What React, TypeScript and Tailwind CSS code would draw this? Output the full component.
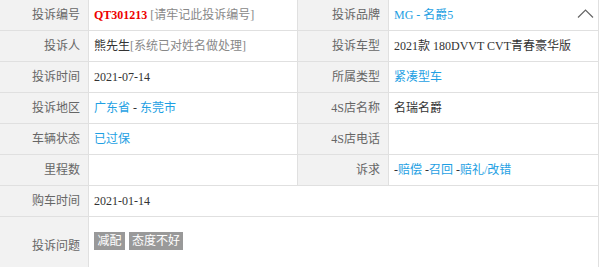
import React from "react";

const font = { fontFamily: '"Liberation Serif", "Noto Sans CJK SC", serif' };

function Label({ children, wide = false, h = "h-[31px]" }: { children: React.ReactNode; wide?: boolean; h?: string }) {
  return (
    <div
      className={`${wide ? "w-[91px]" : "w-[89px]"} ${h} shrink-0 bg-[#f2f2f2] border-r border-b border-[#e0e0e0] flex items-center justify-end pr-[8px] text-[12px] text-[#666]`}
    >
      {children}
    </div>
  );
}

function Value({ children, w, h = "h-[31px]", extra = "" }: { children?: React.ReactNode; w: string; h?: string; extra?: string }) {
  return (
    <div className={`${w} ${h} shrink-0 border-r border-b border-[#e0e0e0] flex items-center pl-[5px] text-[12px] text-[#333] ${extra}`}>
      {children}
    </div>
  );
}

const Blue = ({ children }: { children: React.ReactNode }) => <span className="text-[#1e9fe3]">{children}</span>;

export default function App() {
  return (
    <div className="w-[600px] h-[267px] bg-white" style={font}>
      <div className="w-[599px] flex flex-col">
        <div className="flex">
          <Label>投诉编号</Label>
          <Value w="w-[209px]">
            <span className="font-bold text-[#ee0000]">QT301213</span>
            <span className="text-[#888] ml-[3px]">[请牢记此投诉编号]</span>
          </Value>
          <Label wide>投诉品牌</Label>
          <Value w="w-[210px]" extra="relative">
            <Blue>MG - 名爵5</Blue>
            <svg className="absolute left-[188px] top-[9px]" width="17" height="10" viewBox="0 0 17 10">
              <polyline points="1,8.5 8.5,1 16,8.5" fill="none" stroke="#666" strokeWidth="1.2" />
            </svg>
          </Value>
        </div>
        <div className="flex">
          <Label>投诉人</Label>
          <Value w="w-[209px]">
            <span>熊先生</span>
            <span className="text-[#888]">[系统已对姓名做处理]</span>
          </Value>
          <Label wide>投诉车型</Label>
          <Value w="w-[210px]">2021款 180DVVT CVT青春豪华版</Value>
        </div>
        <div className="flex">
          <Label>投诉时间</Label>
          <Value w="w-[209px]">2021-07-14</Value>
          <Label wide>所属类型</Label>
          <Value w="w-[210px]">
            <Blue>紧凑型车</Blue>
          </Value>
        </div>
        <div className="flex">
          <Label>投诉地区</Label>
          <Value w="w-[209px]">
            <Blue>广东省</Blue>
            <span className="whitespace-pre"> - </span>
            <Blue>东莞市</Blue>
          </Value>
          <Label wide>4S店名称</Label>
          <Value w="w-[210px]">名瑞名爵</Value>
        </div>
        <div className="flex">
          <Label>车辆状态</Label>
          <Value w="w-[209px]">
            <Blue>已过保</Blue>
          </Value>
          <Label wide>4S店电话</Label>
          <Value w="w-[210px]" />
        </div>
        <div className="flex">
          <Label>里程数</Label>
          <Value w="w-[209px]" />
          <Label wide>诉求</Label>
          <Value w="w-[210px]">
            <span className="whitespace-pre">-</span>
            <Blue>赔偿</Blue>
            <span className="whitespace-pre"> -</span>
            <Blue>召回</Blue>
            <span className="whitespace-pre"> -</span>
            <Blue>赔礼/改错</Blue>
          </Value>
        </div>
        <div className="flex">
          <Label>购车时间</Label>
          <Value w="w-[510px]">2021-01-14</Value>
        </div>
        <div className="flex">
          <Label h="h-[51px]">
            <span className="mt-[8px]">投诉问题</span>
          </Label>
          <Value w="w-[510px]" h="h-[51px]" extra="gap-[4px]">
            <span className="bg-[#999] text-white px-[3.5px] h-[18px] leading-[18px] mb-[3px]">减配</span>
            <span className="bg-[#999] text-white px-[3px] h-[18px] leading-[18px] mb-[3px]">态度不好</span>
          </Value>
        </div>
      </div>
    </div>
  );
}
